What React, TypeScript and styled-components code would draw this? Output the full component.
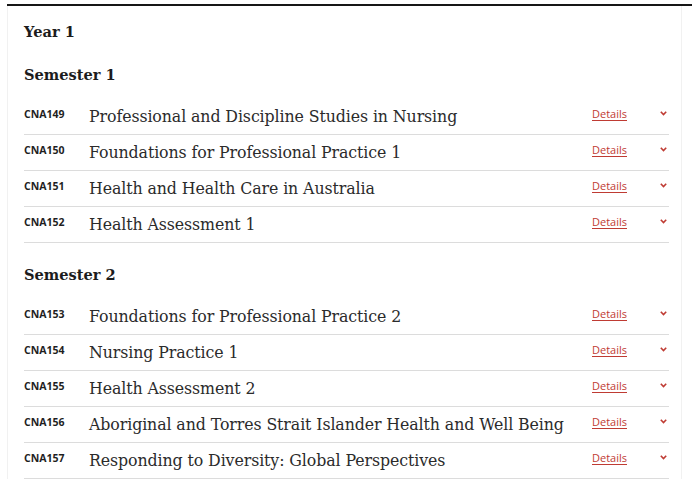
import React from "react";
import styled, { createGlobalStyle } from "styled-components";

const Global = createGlobalStyle`
  html, body { margin: 0; padding: 0; background: #ffffff; }
  body { font-family: "Open Sans", "Liberation Sans", sans-serif; }
`;

const Page = styled.div`
  padding: 4px 0 0 7px;
`;

const TopRule = styled.div`
  border-top: 2px solid #161616;
`;

const Card = styled.div`
  width: 675px;
  box-sizing: border-box;
  border-left: 1px solid #f1f1f1;
  border-right: 1px solid #f1f1f1;
  padding: 16px 12px 0 16px;
`;

const YearTitle = styled.h2`
  margin: 0 0 23px;
  font-family: "DejaVu Serif", serif;
  font-weight: 700;
  font-size: 14.6px;
  line-height: 20px;
  color: #1c1c1c;
`;

const SemesterTitle = styled.h3<{ $first?: boolean }>`
  margin: ${(p) => (p.$first ? "0" : "22px")} 0 14px;
  font-family: "DejaVu Serif", serif;
  font-weight: 700;
  font-size: 14.6px;
  line-height: 20px;
  color: #1c1c1c;
`;

const List = styled.ul`
  list-style: none;
  margin: 0;
  padding: 0;
`;

const Row = styled.li`
  display: grid;
  grid-template-columns: 65px 1fr 68px 9px;
  align-items: center;
  height: 36px;
  box-sizing: border-box;
  border-bottom: 1px solid #dcdcdc;
`;

const Code = styled.span`
  font-family: "Open Sans", sans-serif;
  font-weight: 700;
  font-size: 10.5px;
  color: #1f1f1f;
  margin-top: -6px;
`;

const Name = styled.span`
  font-family: "DejaVu Serif", serif;
  font-size: 15.8px;
  color: #2b2b2b;
  letter-spacing: -0.1px;
`;

const Details = styled.a`
  font-family: "Open Sans", sans-serif;
  font-size: 11px;
  color: #bf3b33;
  text-decoration: underline;
  text-underline-offset: 2px;
  margin-top: -6px;
`;

const Chevron = styled.svg`
  width: 7px;
  height: 5px;
  margin-top: -6px;
`;

type Unit = { code: string; name: string };

const sem1: Unit[] = [
  { code: "CNA149", name: "Professional and Discipline Studies in Nursing" },
  { code: "CNA150", name: "Foundations for Professional Practice 1" },
  { code: "CNA151", name: "Health and Health Care in Australia" },
  { code: "CNA152", name: "Health Assessment 1" },
];

const sem2: Unit[] = [
  { code: "CNA153", name: "Foundations for Professional Practice 2" },
  { code: "CNA154", name: "Nursing Practice 1" },
  { code: "CNA155", name: "Health Assessment 2" },
  { code: "CNA156", name: "Aboriginal and Torres Strait Islander Health and Well Being" },
  { code: "CNA157", name: "Responding to Diversity: Global Perspectives" },
];

const UnitRow = ({ u }: { u: Unit }) => (
  <Row>
    <Code>{u.code}</Code>
    <Name>{u.name}</Name>
    <Details href="#">Details</Details>
    <Chevron viewBox="0 0 7 5">
      <path d="M0.8 0.8 L3.5 3.6 L6.2 0.8" fill="none" stroke="#bf3b33" strokeWidth="1.6" />
    </Chevron>
  </Row>
);

export default function App() {
  return (
    <Page>
      <Global />
      <TopRule>
        <Card>
          <YearTitle>Year 1</YearTitle>
          <SemesterTitle $first>Semester 1</SemesterTitle>
          <List>
            {sem1.map((u) => (
              <UnitRow key={u.code} u={u} />
            ))}
          </List>
          <SemesterTitle>Semester 2</SemesterTitle>
          <List>
            {sem2.map((u) => (
              <UnitRow key={u.code} u={u} />
            ))}
          </List>
        </Card>
      </TopRule>
    </Page>
  );
}
